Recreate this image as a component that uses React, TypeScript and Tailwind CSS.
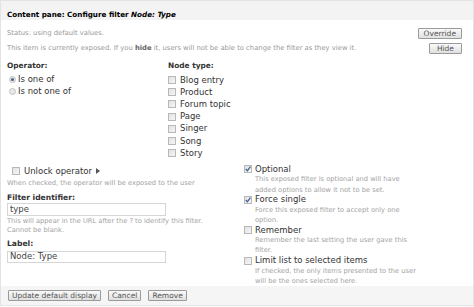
import React from 'react'

const NODE_TYPES = ['Blog entry', 'Product', 'Forum topic', 'Page', 'Singer', 'Song', 'Story']

function Box({ checked = false }: { checked?: boolean }) {
  return (
    <span className="relative inline-block h-[8px] w-[8px] shrink-0 border border-[#b8b8b8] bg-gradient-to-br from-[#e2e2e2] to-[#f6f6f6]">
      {checked && (
        <svg viewBox="0 0 8 8" className="absolute left-[-1px] top-[-1px] h-[8px] w-[8px]">
          <path d="M1.8 4 L3.4 5.8 L6.4 1.6" fill="none" stroke="#3b5b93" strokeWidth="1.2" />
        </svg>
      )}
    </span>
  )
}

function Radio({ checked = false }: { checked?: boolean }) {
  return (
    <span className="flex h-[7px] w-[7px] shrink-0 items-center justify-center rounded-full border border-[#c2c2c2] bg-[#e8e8e8]">
      {checked && <span className="h-[3px] w-[3px] rounded-full bg-[#4a5f8a]" />}
    </span>
  )
}

function Btn({ children, className = 'px-[3px]' }: { children: React.ReactNode; className?: string }) {
  return (
    <button
      className={`h-[11px] rounded-[1px] border border-[#9a9a9a] bg-gradient-to-b from-[#fafafa] to-[#e0e0e0] text-[7.5px] leading-[9px] text-[#555] ${className}`}
    >
      {children}
    </button>
  )
}

function Check({ label, checked, desc }: { label: string; checked?: boolean; desc: string[] }) {
  return (
    <div>
      <div className="flex h-[10px] items-center gap-[3px]">
        <Box checked={checked} />
        <span className="text-[8.5px] text-[#333]">{label}</span>
      </div>
      <div className="pl-[11px] text-[6.7px] leading-[10.2px] text-[#a3a3a3]">
        {desc.map((d) => (
          <div key={d}>{d}</div>
        ))}
      </div>
    </div>
  )
}

export default function App() {
  return (
    <div
      className="h-[307px] w-[474px] overflow-hidden bg-white"
      style={{ fontFamily: '"DejaVu Sans", Verdana, sans-serif' }}
    >
      <div className="flex h-[306px] flex-col border-x border-b border-t border-[#e3e3e3]">
        <div className="h-[19px] bg-[#f3f3f3] px-[6px] pt-[9px] text-[7.2px] font-bold leading-[10px] text-black">
          Content pane: Configure filter <i>Node: Type</i>
        </div>

        <div className="px-[6px] pt-[5px]">
          <div className="flex h-[16px] items-center justify-between pr-[5px]">
            <span className="text-[6.8px] text-[#999]">Status: using default values.</span>
            <Btn className="px-[5px]">Override</Btn>
          </div>
          <div className="flex h-[15px] items-center justify-between pr-[5px]">
            <span className="text-[6.8px] text-[#999]">
              This item is currently exposed. If you <b className="text-[#666]">hide</b> it, users will not be able to change the filter as they view it.
            </span>
            <Btn className="px-[7px]">Hide</Btn>
          </div>

          <div className="mt-[4px] flex">
            <div className="w-[161px]">
              <div className="text-[7.4px] font-bold leading-[12px] text-[#333]">Operator:</div>
              <div className="mt-[1px]">
                <div className="flex h-[12px] items-center gap-[2px] pl-[2px]">
                  <Radio checked />
                  <span className="text-[8.5px] text-[#333]">Is one of</span>
                </div>
                <div className="flex h-[12px] items-center gap-[2px] pl-[2px]">
                  <Radio />
                  <span className="text-[8.5px] text-[#333]">Is not one of</span>
                </div>
              </div>
            </div>
            <div>
              <div className="text-[7.4px] font-bold leading-[12px] text-[#333]">Node type:</div>
              <div className="mt-[2px]">
                {NODE_TYPES.map((t) => (
                  <div key={t} className="flex h-[12.2px] items-center gap-[4px]">
                    <Box />
                    <span className="text-[8.5px] text-[#333]">{t}</span>
                  </div>
                ))}
              </div>
            </div>
          </div>

          <div className="mt-[5px] flex">
            <div className="w-[237px] pt-[1px]">
              <div className="flex h-[12px] items-center gap-[4px] pl-[5px]">
                <Box />
                <span className="text-[8.5px] text-[#333]">Unlock operator</span>
                <svg viewBox="0 0 4 6" className="h-[6px] w-[4px]">
                  <path d="M0 0 L4 3 L0 6 Z" fill="#555" />
                </svg>
              </div>
              <div className="mt-[1.5px] text-[6.7px] leading-[9px] text-[#a3a3a3]">
                When checked, the operator will be exposed to the user
              </div>
              <div className="mt-[5.5px] text-[7.6px] font-bold leading-[10px] text-[#333]">Filter identifier:</div>
              <div className="flex h-[13px] w-[159px] items-center border border-[#d6d6d6] px-[2px] text-[8.5px] text-[#444]">
                type
              </div>
              <div className="text-[6.7px] leading-[9px] text-[#a3a3a3]">
                <div className="pt-[0.5px]">This will appear in the URL after the ? to identify this filter.</div>
                <div>Cannot be blank.</div>
              </div>
              <div className="mt-[4.5px] text-[7.6px] font-bold leading-[10px] text-[#333]">Label:</div>
              <div className="mt-[1.5px] flex h-[12px] w-[159px] items-center border border-[#d6d6d6] px-[2px] text-[8.5px] text-[#444]">
                Node: Type
              </div>
            </div>
            <div className="flex flex-col">
              <Check
                label="Optional"
                checked
                desc={['This exposed filter is optional and will have', 'added options to allow it not to be set.']}
              />
              <Check label="Force single" checked desc={['Force this exposed filter to accept only one', 'option.']} />
              <Check label="Remember" desc={['Remember the last setting the user gave this', 'filter.']} />
              <Check
                label="Limit list to selected items"
                desc={['If checked, the only items presented to the user', 'will be the ones selected here.']}
              />
            </div>
          </div>
        </div>

        <div className="mt-auto flex h-[20px] items-center gap-[7px] bg-[#f5f5f5] px-[7px]">
          <Btn>Update default display</Btn>
          <Btn>Cancel</Btn>
          <Btn>Remove</Btn>
        </div>
      </div>
    </div>
  )
}
